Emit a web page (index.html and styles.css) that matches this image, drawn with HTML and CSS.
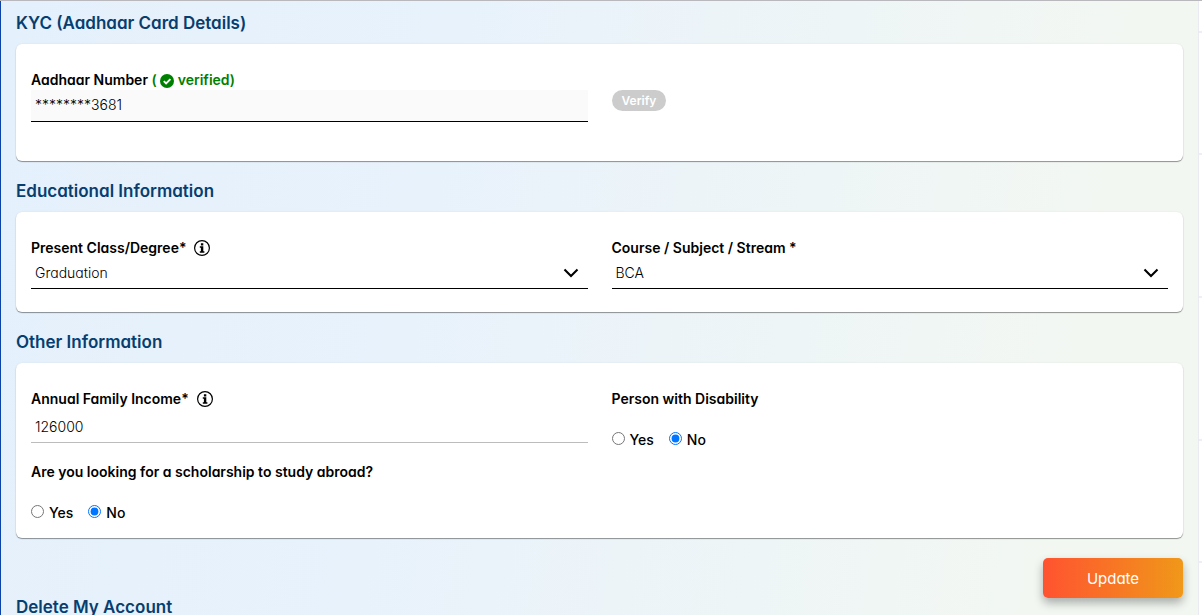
FILE: index.html
```html
<!DOCTYPE html>
<html lang="en">
<head>
<meta charset="utf-8">
<title>Profile</title>
<link rel="stylesheet" href="styles.css">
</head>
<body>
<div class="page">
  <main class="panel">
    <h2 class="title">KYC (Aadhaar Card Details)</h2>
    <section class="card card-kyc">
      <div class="field">
        <label class="label" for="aadhaar">Aadhaar Number <span class="verified">( <svg class="check" viewBox="0 0 14 14" aria-hidden="true"><circle cx="7" cy="7" r="7" fill="#008000"/><path d="M3.8 7.2 6.1 9.5 10.4 5.1" fill="none" stroke="#fff" stroke-width="1.9"/></svg> verified)</span></label>
        <input class="control control-locked" id="aadhaar" type="text" value="********3681" readonly>
      </div>
      <div class="field field-action">
        <button class="verify" type="button" disabled>Verify</button>
      </div>
    </section>

    <h2 class="title">Educational Information</h2>
    <section class="card">
      <div class="field">
        <div class="label-row">
          <label class="label" for="degree">Present Class/Degree*</label>
          <svg class="info" viewBox="0 0 16 16" aria-hidden="true"><circle cx="8" cy="8" r="7.4" fill="none" stroke="#000" stroke-width="1.2"/><path d="M6.900 3.200h2.400v2.200H6.900zM5.800 6.300h3.500v4.900h1.100v1.500H5.800v-1.500h1.100V7.800H5.800z"/></svg>
        </div>
        <div class="select-wrap">
          <select class="control" id="degree"><option>Graduation</option></select>
          <svg class="chevron" viewBox="0 0 16 10" aria-hidden="true"><path d="M1.500 1.500 8 8l6.500-6.500" fill="none" stroke="#000" stroke-width="2.100"/></svg>
        </div>
      </div>
      <div class="field">
        <div class="label-row"><label class="label" for="course">Course / Subject / Stream *</label></div>
        <div class="select-wrap">
          <select class="control" id="course"><option>BCA</option></select>
          <svg class="chevron" viewBox="0 0 16 10" aria-hidden="true"><path d="M1.500 1.500 8 8l6.500-6.500" fill="none" stroke="#000" stroke-width="2.100"/></svg>
        </div>
      </div>
    </section>

    <h2 class="title">Other Information</h2>
    <section class="card card-other">
      <div class="field">
        <div class="label-row">
          <label class="label" for="income">Annual Family Income*</label>
          <svg class="info" viewBox="0 0 16 16" aria-hidden="true"><circle cx="8" cy="8" r="7.4" fill="none" stroke="#000" stroke-width="1.2"/><path d="M6.900 3.200h2.400v2.200H6.900zM5.800 6.300h3.500v4.900h1.100v1.500H5.800v-1.500h1.100V7.800H5.800z"/></svg>
        </div>
        <input class="control control-light" id="income" type="text" value="126000">
      </div>
      <fieldset class="field group">
        <legend class="label">Person with Disability</legend>
        <div class="options">
          <label class="option"><input class="radio" type="radio" name="disability">Yes</label>
          <label class="option"><input class="radio" type="radio" name="disability" checked>No</label>
        </div>
      </fieldset>
      <fieldset class="field group">
        <legend class="label">Are you looking for a scholarship to study abroad?</legend>
        <div class="options">
          <label class="option"><input class="radio" type="radio" name="abroad">Yes</label>
          <label class="option"><input class="radio" type="radio" name="abroad" checked>No</label>
        </div>
      </fieldset>
    </section>

    <div class="actions"><button class="update" type="button">Update</button></div>
    <h2 class="title title-last">Delete My Account</h2>
  </main>
  <aside class="rail" aria-hidden="true">
    <div class="rail-row rail-first"></div>
    <div class="rail-row"></div>
    <div class="rail-row rail-tall"></div>
    <div class="rail-row rail-tall"></div>
    <div class="rail-row"></div>
  </aside>
</div>
</body>
</html>
```
FILE: styles.css
```css
* { box-sizing: border-box; }
html { height: 100%; }
body {
  height: 100%;
  margin: 0;
  overflow: hidden;
  font-family: Inter, sans-serif;
  font-size: 14px;
  font-feature-settings: "cv11";
  color: #000;
}
input, select, button { font: inherit; font-feature-settings: inherit; }
.page {
  display: flex;
  min-height: 100%;
  border-top: 1px solid #b9b9bd;
}
.panel {
  flex: 1;
  min-width: 0;
  padding: 1px 15px 0;
  border-left: 1px solid #0b43a8;
  background: linear-gradient(100deg, #e4f0fc 0%, #e8f2fb 35%, #f2f7f3 85%, #f3f7f1 100%);
}
.rail {
  width: 4px;
  border-left: 1px solid #eaeaf5;
  background: #fff;
}
.rail-row { height: 122px; border-bottom: 2px solid #eeeef7; }
.rail-first { height: 32px; }
.rail-tall { height: 143px; }
.title {
  margin: 0;
  padding: 8px 0;
  color: #073e6f;
  font-size: 17px;
  line-height: 26px;
  font-weight: 600;
}
.title-last { padding-top: 0; }
.card {
  display: grid;
  grid-template-columns: 1fr 1fr;
  gap: 8px 24px;
  margin-bottom: 9px;
  padding: 24px 15px 23px;
  border-radius: 6px;
  background: #fff;
  box-shadow: 0 1px 1px rgba(0, 0, 0, .4), 0 0 2px rgba(0, 0, 0, .08);
}
.card-kyc { padding-bottom: 39px; }
.card-other { padding-bottom: 13px; }
.field { display: flex; flex-direction: column; min-width: 0; }
.label, .option { font-weight: 600; line-height: 24px; }
.label-row { display: flex; align-items: center; gap: 8px; }
.verified { color: #008000; }
.check { width: 14px; height: 14px; vertical-align: -3px; }
.info { width: 16px; height: 16px; }
.control {
  width: 100%;
  height: 29px;
  padding: 0 4px 4px;
  border: 0;
  border-bottom: 1px solid #000;
  border-radius: 0;
  background: transparent;
  color: #000;
  font-weight: 300;
  outline: 0;
  appearance: none;
}
.control-locked { height: 32px; padding-bottom: 2px; background: #fafafa; margin-top: -2px; }
.control-light { height: 32px; padding-bottom: 0; border-color: #bcbcbc; }
.select-wrap { display: grid; }
.select-wrap > * { grid-area: 1 / 1; }
.chevron {
  width: 16px;
  height: 10px;
  margin: 0 9px 4px 0;
  place-self: center end;
  pointer-events: none;
}
.field-action { align-items: flex-start; padding-top: 22px; }
.verify {
  padding: 0 10px;
  border: 0;
  border-radius: 11px;
  background: #ccc;
  color: #fff;
  font-size: 12px;
  line-height: 21px;
  font-weight: 600;
}
.group { margin: 0; padding: 0; border: 0; display: block; }
.group .label { padding: 0; }
.options { display: flex; gap: 15px; padding: 17px 0 0; }
.option { display: flex; align-items: center; gap: 5px; font-weight: 500; }
.radio { width: 13px; height: 13px; margin: 0 0 3px; }
.actions { display: flex; justify-content: flex-end; padding: 11px 0 0; margin-bottom: -4px; }
.update {
  width: 140px;
  height: 40px;
  border: 0;
  border-radius: 5px;
  background: linear-gradient(90deg, #ff5330, #f09819);
  box-shadow: 0 5px 10px rgba(0, 0, 0, .3);
  color: #fff;
  font-size: 15px;
}
```
